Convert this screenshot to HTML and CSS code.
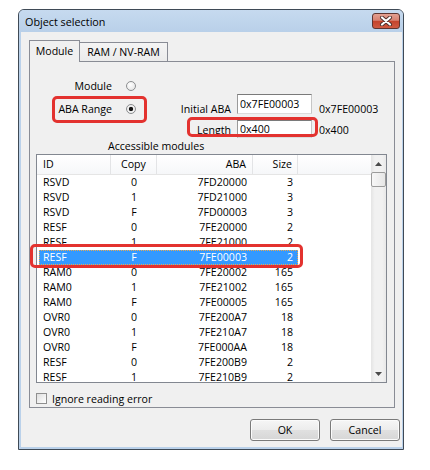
FILE: index.html
```html
<!DOCTYPE html>
<html>
<head>
<meta charset="utf-8">
<title>Object selection</title>
<link rel="stylesheet" href="styles.css">
</head>
<body>
<div class="window">
  <div class="titlebar">
    <span class="title">Object selection</span>
    <div class="close">
      <svg width="14" height="10" viewBox="0 0 14 10">
        <path d="M3 1.5 L11 8.5 M11 1.5 L3 8.5" stroke="#4a2f2c" stroke-width="4" stroke-linecap="round"/>
        <path d="M3 1.5 L11 8.5 M11 1.5 L3 8.5" stroke="#ffffff" stroke-width="2.2" stroke-linecap="round"/>
      </svg>
    </div>
  </div>
  <div class="client">
    <div class="tabs">
      <div class="tab active">Module</div>
      <div class="tab">RAM / NV-RAM</div>
    </div>
    <div class="panel">
      <div class="options">
        <div class="radios">
          <div class="radio-row"><span class="rlabel">Module</span><span class="radio"></span></div>
          <div class="radio-row"><span class="rlabel">ABA Range</span><span class="radio checked"></span></div>
        </div>
        <div class="fields">
          <div class="field-row first">
            <span class="flabel">Initial ABA</span>
            <input class="tb" type="text" value="0x7FE00003">
            <span class="fvalue">0x7FE00003</span>
          </div>
          <div class="field-row second">
            <span class="flabel">Length</span>
            <input class="tb" type="text" value="0x400">
            <span class="fvalue">0x400</span>
          </div>
        </div>
      </div>
      <div class="caption">Accessible modules</div>
      <div class="list">
        <div class="list-main">
          <div class="header">
            <div class="hc h-id">ID</div>
            <div class="hc c-copy">Copy</div>
            <div class="hc c-aba">ABA</div>
            <div class="hc c-size">Size</div>
            <div class="hc h-fill"></div>
          </div>
          <div class="rows">
            <div class="row"><span class="c-id">RSVD</span><span class="c-copy">0</span><span class="c-aba">7FD20000</span><span class="c-size">3</span></div>
            <div class="row"><span class="c-id">RSVD</span><span class="c-copy">1</span><span class="c-aba">7FD21000</span><span class="c-size">3</span></div>
            <div class="row"><span class="c-id">RSVD</span><span class="c-copy">F</span><span class="c-aba">7FD00003</span><span class="c-size">3</span></div>
            <div class="row"><span class="c-id">RESF</span><span class="c-copy">0</span><span class="c-aba">7FE20000</span><span class="c-size">2</span></div>
            <div class="row"><span class="c-id">RESF</span><span class="c-copy">1</span><span class="c-aba">7FE21000</span><span class="c-size">2</span></div>
            <div class="row sel"><span class="c-id">RESF</span><span class="c-copy">F</span><span class="c-aba">7FE00003</span><span class="c-size">2</span></div>
            <div class="row"><span class="c-id">RAM0</span><span class="c-copy">0</span><span class="c-aba">7FE20002</span><span class="c-size">165</span></div>
            <div class="row"><span class="c-id">RAM0</span><span class="c-copy">1</span><span class="c-aba">7FE21002</span><span class="c-size">165</span></div>
            <div class="row"><span class="c-id">RAM0</span><span class="c-copy">F</span><span class="c-aba">7FE00005</span><span class="c-size">165</span></div>
            <div class="row"><span class="c-id">OVR0</span><span class="c-copy">0</span><span class="c-aba">7FE200A7</span><span class="c-size">18</span></div>
            <div class="row"><span class="c-id">OVR0</span><span class="c-copy">1</span><span class="c-aba">7FE210A7</span><span class="c-size">18</span></div>
            <div class="row"><span class="c-id">OVR0</span><span class="c-copy">F</span><span class="c-aba">7FE000AA</span><span class="c-size">18</span></div>
            <div class="row"><span class="c-id">RESF</span><span class="c-copy">0</span><span class="c-aba">7FE200B9</span><span class="c-size">2</span></div>
            <div class="row"><span class="c-id">RESF</span><span class="c-copy">1</span><span class="c-aba">7FE210B9</span><span class="c-size">2</span></div>
          </div>
        </div>
        <div class="scrollbar">
          <div class="sb-btn"><svg width="7" height="4" viewBox="0 0 7 4"><path d="M0 4 L3.5 0 L7 4 Z" fill="#4a4a4a"/></svg></div>
          <div class="sb-thumb"></div>
          <div class="sb-track"></div>
          <div class="sb-btn"><svg width="7" height="4" viewBox="0 0 7 4"><path d="M0 0 L3.5 4 L7 0 Z" fill="#4a4a4a"/></svg></div>
        </div>
      </div>
      <div class="check-row"><span class="checkbox"></span><span>Ignore reading error</span></div>
    </div>
    <div class="buttons">
      <button class="btn">OK</button>
      <button class="btn">Cancel</button>
    </div>
  </div>
</div>
<div class="mark mark-aba"></div>
<div class="mark mark-len"></div>
<div class="mark mark-row"></div>
</body>
</html>
```
FILE: styles.css
```css
* { box-sizing: border-box; }
html, body { margin: 0; }
body {
  padding: 9px 0 0 18px;
  width: 430px;
  height: 470px;
  background: #ffffff;
  font-family: "Open Sans", "Liberation Sans", sans-serif;
  font-size: 10.6px;
  color: #000;
  position: relative;
  overflow: hidden;
}

.window {
  width: 386px;
  height: 441px;
  border: 1px solid #3f4a56;
  border-radius: 6px 6px 0 0;
  background: #bad1ea;
  display: flex;
  flex-direction: column;
  overflow: hidden;
}
.titlebar {
  height: 22px;
  flex: none;
  display: flex;
  align-items: center;
  justify-content: space-between;
  padding: 0 3px 0 6px;
  background: linear-gradient(#c6daef, #b9d0e9);
}
.title { font-size: 10.8px; }
.close {
  width: 28px;
  height: 16px;
  border: 1px solid #5e3531;
  border-radius: 3px;
  background: linear-gradient(#e3a091 0%, #d78171 45%, #c5442d 52%, #cf5a42 100%);
  display: flex;
  align-items: center;
  justify-content: center;
}

.client {
  flex: 1;
  margin: 0 1px 2px 2px;
  background: #f0f0f0;
  padding: 8px 0 0 8px;
  display: flex;
  flex-direction: column;
}
.tabs {
  display: flex;
  align-items: flex-end;
  height: 22px;
  margin-bottom: -1px;
  flex: none;
}
.tab {
  height: 20px;
  width: 88px;
  border: 1px solid #898c95;
  border-left: none;
  border-bottom: none;
  background: linear-gradient(#f4f4f4, #ebebeb);
  text-align: center;
  line-height: 18px;
  white-space: nowrap;
}
.tab.active {
  height: 22px;
  width: 51px;
  border-left: 1px solid #898c95;
  background: #f0f0f0;
  position: relative;
  z-index: 1;
  line-height: 20px;
}
.panel {
  width: 366px;
  height: 347px;
  flex: none;
  border: 1px solid #898c95;
  background: #f0f0f0;
  display: flex;
  flex-direction: column;
}

.options {
  display: flex;
  margin-top: 14px;
  height: 60px;
  flex: none;
}
.radios {
  width: 110px;
  display: flex;
  flex-direction: column;
  gap: 3px;
}
.radio-row {
  height: 20px;
  display: flex;
  align-items: center;
}
.rlabel { width: 82px; text-align: right; }
.radio {
  width: 10px;
  height: 10px;
  margin-left: 14px;
  border-radius: 50%;
  border: 1px solid #8c8e90;
  background: radial-gradient(circle at 40% 35%, #ffffff, #e0e0e0);
}
.radio.checked {
  background: radial-gradient(circle, #151515 0, #151515 1.8px, #f6f6f6 2.6px, #e0e0e0 100%);
}
.fields {
  margin-top: 18px;
  display: flex;
  flex-direction: column;
  gap: 3px;
}
.field-row {
  display: flex;
  align-items: flex-start;
}
.flabel { width: 91px; text-align: right; line-height: 14px; }
.fvalue { margin-left: 7px; line-height: 14px; }
.tb {
  margin: 0 0 0 6px;
  width: 75px;
  height: 20px;
  padding: 0 2px;
  font: inherit;
  color: #000;
  background: #fff;
  border: 1px solid;
  border-color: #7a7a7a #c6c6c6 #dcdcdc #9a9a9a;
  outline: none;
}
.first .flabel, .first .fvalue { margin-top: 8px; }
.second .flabel, .second .fvalue { margin-top: 4px; }
.second .tb { margin-top: 1px; height: 18px; }

.caption {
  margin: 3px 0 0 78px;
  line-height: 14px;
}
.list {
  margin: 1px 0 0 6px;
  width: 351px;
  height: 229px;
  flex: none;
  border: 1px solid #828790;
  background: #fff;
  display: flex;
  overflow: hidden;
}
.list-main {
  flex: 1;
  min-width: 0;
  overflow: hidden;
}
.header {
  display: flex;
  height: 20px;
  border-bottom: 1px solid #e5e5e5;
  background: linear-gradient(#ffffff, #f6f7f9);
}
.hc {
  border-right: 1px solid #e3e4e6;
  line-height: 19px;
  white-space: nowrap;
}
.h-id { width: 74px; padding-left: 6px; }
.h-fill { flex: 1; border-right: none; }
.c-id { width: 72px; padding-left: 4px; }
.c-copy { width: 46px; text-align: center; }
.c-aba { width: 96px; text-align: right; padding-right: 6px; }
.c-size { width: 45px; text-align: right; padding-right: 5px; }
.row {
  display: flex;
  height: 15px;
  line-height: 15px;
  margin-left: 2px;
  width: 259px;
  white-space: nowrap;
}
.row.sel {
  background: #3399ff;
  color: #fff;
  outline: 1px dotted #e9a94f;
  outline-offset: -1px;
}
.scrollbar {
  width: 15px;
  flex: none;
  display: flex;
  flex-direction: column;
  background: linear-gradient(to right, #e4e4e4, #f1f1f1 25%, #f1f1f1 75%, #e8e8e8);
}
.sb-btn {
  height: 17px;
  flex: none;
  display: flex;
  align-items: center;
  justify-content: center;
}
.sb-thumb {
  height: 15px;
  flex: none;
  border: 1px solid #9b9b9b;
  border-radius: 2px;
  background: linear-gradient(to right, #f7f7f7, #e6e6e6);
}
.sb-track { flex: 1; }

.check-row {
  display: flex;
  align-items: center;
  gap: 5px;
  height: 11px;
  margin: 10px 0 0 6px;
}
.checkbox {
  width: 11px;
  height: 11px;
  border: 1px solid #8f8f8f;
  background: linear-gradient(135deg, #dedede, #ffffff);
}

.buttons {
  display: flex;
  justify-content: flex-end;
  gap: 10px;
  margin-top: 11px;
  padding-right: 2px;
}
.btn {
  width: 70px;
  height: 22px;
  padding: 0;
  font: inherit;
  color: #000;
  border: 1px solid #7a7a7a;
  border-radius: 3px;
  background: linear-gradient(#f6f6f6, #ececec 50%, #e0e0e0 51%, #d6d6d6);
  box-shadow: inset 0 0 0 1px #fbfbfb;
}

.mark {
  position: absolute;
  border: 3px solid #e3322f;
  border-radius: 5px;
}
.mark-aba { left: 52px; top: 96px; width: 95px; height: 27px; }
.mark-len { left: 187px; top: 117px; width: 131px; height: 20px; }
.mark-row { left: 30px; top: 244px; width: 273px; height: 24px; }
```
